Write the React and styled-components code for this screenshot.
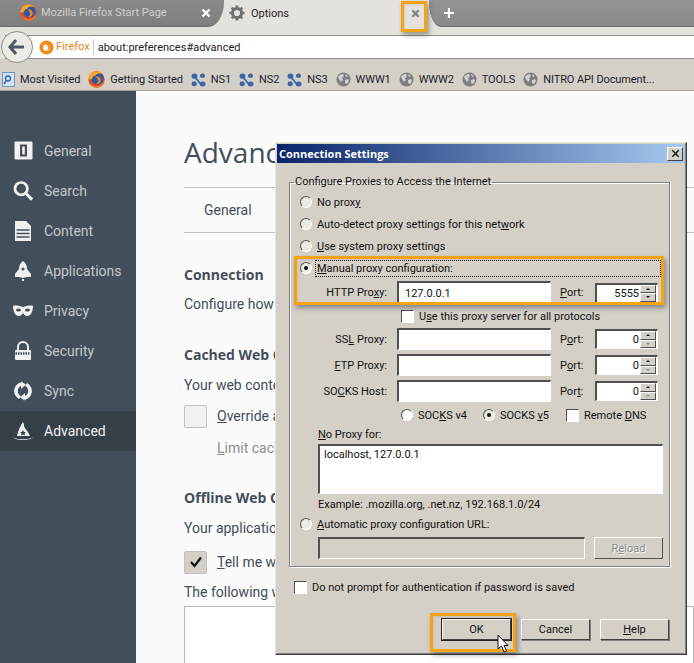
import React from "react";
import styled, { createGlobalStyle } from "styled-components";

const Global = createGlobalStyle`
  html, body { margin: 0; padding: 0; background: #fbfbfb; }
  * { box-sizing: border-box; }
`;
const UI = `Roboto, "Open Sans", sans-serif`;
const HEAD = `"Open Sans", "Noto Sans", sans-serif`;
const TAHOMA = `Roboto, "Noto Sans", sans-serif`;

const Page = styled.div`
  position: relative; width: 694px; height: 663px; overflow: hidden;
  display: flex; flex-direction: column; font-family: ${UI}; background: #fbfbfb;
`;
const TabStrip = styled.div`
  display: flex; height: 27px; background: #e4e2dc; flex: none; font-size: 11px; white-space: nowrap;
`;
const InactiveTab = styled.div`
  width: 224px; height: 27px; padding: 0 13px 1px 20px; display: flex; align-items: center; gap: 4px;
  background: linear-gradient(#8a8a8a, #7e7e7e); color: #cfcfcf;
  border-bottom: 1px solid #666c72; border-radius: 0 0 16px 0 / 0 0 26px 0;
`;
const TabClose = styled.span`
  margin-left: auto; display: flex;
`;
const ActiveTab = styled.div`
  width: 205px; height: 27px; padding: 0 9px 1px 5px; display: flex; align-items: center; gap: 6px; color: #222;
`;
const RestTabs = styled.div`
  flex: 1; height: 27px; padding-left: 14px; display: flex; align-items: center;
  background: linear-gradient(#939393, #8a8a8a);
  border-bottom: 1px solid #666c72; border-radius: 0 0 0 12px / 0 0 0 26px;
`;
const NavBar = styled.div`
  height: 32px; flex: none; background: #e4e2dc; display: flex; align-items: flex-end;
`;
const BackButton = styled.div`
  position: relative; z-index: 1; width: 32px; height: 32px; border-radius: 50%; flex: none;
  margin: 0 -28px 0 1px; transform: translateY(4px);
  background: #ecebe6; border: 1px solid #8b8b8b; display: flex; align-items: center; justify-content: center;
`;
const UrlBar = styled.div`
  flex: 1; height: 24px; background: #fff; border-top: 1px solid #8e8e8e; border-bottom: 1px solid #8e8e8e;
  padding-left: 34px; display: flex; align-items: center; font-size: 11px; color: #222;
`;
const Identity = styled.span`
  color: #e8852a; margin-left: 2px; padding-right: 3px; border-right: 1px solid #c9c9c9; margin-right: 4px; line-height: 16px;
`;
const Bookmarks = styled.div`
  height: 32px; flex: none; background: #d4d0c8; display: flex; align-items: center; gap: 8px; padding: 10px 0 0 2px;
  font-size: 11px; letter-spacing: -0.1px; color: #1c1c2c; border-bottom: 1px solid #a8a49c; white-space: nowrap;
`;
const Bookmark = styled.div`
  display: flex; align-items: center; gap: 5px;
`;
const Main = styled.div`
  flex: 1; display: flex; min-height: 0;
`;
const Sidebar = styled.nav`
  width: 136px; flex: none; background: #424f5a; padding-top: 40px;
`;
const NavItem = styled.div`
  height: 40px; display: flex; align-items: center; padding: 0 0 1px 13px; gap: 11px; font-size: 14px;
  color: ${p => (p.$active ? "#f1f1f1" : "#c4c8cc")};
  background: ${p => (p.$active ? "#343f48" : "transparent")};
`;
const IconBox = styled.span`
  width: 20px; height: 20px; display: flex; align-items: center; justify-content: center; flex: none;
`;
const Content = styled.main`
  flex: 1; padding: 40px 0 0 48px; color: #424e5a; font-size: 14px; white-space: nowrap; overflow: hidden; min-width: 0;
`;
const Title = styled.h1`
  font-family: ${HEAD}; font-size: 28px; font-weight: 400; margin: 0; height: 44px; line-height: 42px;
`;
const TabsRow = styled.div`
  margin-top: 12px; height: 46px; border-top: 1px solid #c1c1c1; border-bottom: 1px solid #c1c1c1;
  padding-left: 20px; display: flex; align-items: center;
`;
const SectionHead = styled.h2`
  font-family: ${HEAD}; font-size: 14px; font-weight: 700; margin: ${p => p.$top}px 0 0; height: 20px; line-height: 20px;
`;
const Para = styled.p`
  margin: ${p => p.$top}px 0 0; height: 20px; line-height: 20px;
`;
const CheckRow = styled.div`
  margin-top: ${p => p.$top}px; display: flex; align-items: center; gap: 10px; height: 22px;
`;
const PrefCheck = styled.span`
  width: 23px; height: 23px; border: 1px solid #c1c1c1; border-radius: 2px; flex: none;
  background: ${p => (p.$on ? "#d4d0c8" : "#f1f1f1")}; display: flex; align-items: center; justify-content: center;
`;
const Muted = styled.p`
  margin: ${p => p.$top}px 0 0 33px; height: 20px; line-height: 20px; color: #8b8f94;
`;
const ListBox = styled.div`
  margin-top: 4px; height: 70px; background: #fff; border: 1px solid #b8b8b8;
`;

const Dialog = styled.section`
  position: absolute; left: 275px; top: 142px; width: 412px; height: 513px;
  background: #d4d0c8; padding: 1px;
  border: 1px solid #e8e6e0; border-right-color: #404040; border-bottom-color: #404040;
  box-shadow: inset -1px -1px 0 #808080;
  font-family: ${TAHOMA}; font-size: 11px; color: #111;
`;
const TitleBar = styled.header`
  height: 19px; background: linear-gradient(90deg, #0a246a, #a6caf0); color: #fff; font-weight: 700;
  font-family: ${HEAD};
  display: flex; align-items: center; justify-content: space-between; padding: 0 2px 0 2px; font-size: 11px;
`;
const CloseBtn = styled.span`
  width: 16px; height: 14px; background: #d4d0c8; display: flex; align-items: center; justify-content: center;
  border: 1px solid #fff; border-right-color: #404040; border-bottom-color: #404040;
`;
const Group = styled.fieldset`
  margin: 12px 15px 0 12px; padding: 0; height: 392px; min-width: 0;
  border: 1px solid #808080; box-shadow: 1px 1px 0 #fff, inset 1px 1px 0 #fff;
`;
const Legend = styled.legend`
  margin-left: 4px; padding: 0 1px; height: 14px; line-height: 14px;
`;
const RadioRow = styled.div`
  height: 22px; display: flex; align-items: center; gap: 5px; padding-left: 10px;
  margin-top: ${p => p.$top || 0}px;
`;
const FocusLabel = styled.span`
  flex: none; width: 346px; height: 17px; line-height: 15px; border: 1px dotted #222; margin-left: -2px; padding-left: 1px;
`;
const Radio = styled.span`
  width: 12px; height: 12px; border-radius: 50%; flex: none; display: flex; align-items: center; justify-content: center;
  background: ${p => (p.$white ? "#fff" : "#ece9e3")};
  border: 1px solid #505050; border-right-color: #fff; border-bottom-color: #fff;
  &::after {
    content: ""; width: 4px; height: 4px; border-radius: 50%; background: ${p => (p.$on ? "#111" : "transparent")};
  }
`;
const ProxyGrid = styled.div`
  display: grid; grid-template-columns: 97px 164px 44px 63px; align-items: center;
  height: ${p => p.$h || 22}px; margin-top: ${p => p.$top || 0}px;
`;
const FieldLabel = styled.label`
  text-align: right; white-space: nowrap;
`;
const Field = styled.div`
  width: ${p => p.$w || 154}px; height: ${p => p.$h || 22}px; background: ${p => p.$bg || "#fff"};
  border: 2px solid #505050; border-right: 1px solid #fff; border-bottom: 1px solid #fff;
  padding-left: 6px; display: flex; align-items: center;
`;
const ProxyField = styled(Field)`
  margin-left: 10px;
`;
const PortLabel = styled.label`
  padding-left: 9px; white-space: nowrap;
`;
const Spinner = styled.div`
  width: 63px; height: 20px; background: #fff;
  border: 2px solid #505050; border-right: 1px solid #fff; border-bottom: 1px solid #fff;
  display: flex; align-items: center; justify-content: flex-end;
`;
const SpinValue = styled.span`
  padding-right: 1px;
`;
const SpinBtns = styled.span`
  width: 16px; height: 17px; display: flex; flex-direction: column; flex: none; margin-right: 1px;
`;
const SpinBtn = styled.span`
  flex: 1; background: #d4d0c8; border: 1px solid #fff; border-right-color: #505050; border-bottom-color: #505050;
  display: flex; align-items: center; justify-content: center;
  &::after {
    content: ""; border-left: 2px solid transparent; border-right: 2px solid transparent;
    ${p => (p.$down ? "border-top: 2px solid" : "border-bottom: 2px solid")} ${p => (p.$dim ? "#8a8a8a" : "#111")};
  }
`;
const CheckLine = styled.div`
  height: 22px; display: flex; align-items: center; gap: 5px;
  padding-left: ${p => p.$left || 0}px; margin-top: ${p => p.$top || 0}px;
`;
const ClassicCheck = styled.span`
  width: 13px; height: 13px; background: #fff; flex: none;
  border: 1px solid #505050; border-right-color: #fff; border-bottom-color: #fff;
`;
const SocksRow = styled.div`
  height: 22px; display: flex; align-items: center; padding-left: 111px; margin-top: 2px;
`;
const SocksItem = styled.span`
  display: flex; align-items: center; gap: 5px; width: ${p => p.$w}px; flex: none;
`;
const PlainLabel = styled.div`
  padding-left: 28px; height: ${p => p.$h}px; line-height: ${p => p.$h}px; margin-top: ${p => p.$top || 0}px;
`;
const TextArea = styled.div`
  margin: 2px 0 0 28px; width: 345px; height: 50px; background: #fff;
  border: 2px solid #505050; border-right: 1px solid #fff; border-bottom: 1px solid #fff;
  padding: 1px 4px; line-height: 16px;
`;
const UrlRow = styled.div`
  display: flex; gap: 9px; padding-left: 28px; margin-top: 2px;
`;
const Reload = styled.div`
  width: 69px; height: 22px; display: flex; align-items: center; justify-content: center; color: #8a8a8a;
  text-shadow: 1px 1px 0 #fff;
  border: 1px solid #fff; border-right-color: #505050; border-bottom-color: #505050;
`;
const Footer = styled.div`
  display: flex; gap: 10px; justify-content: flex-end; padding-right: 16px; margin-top: 21px;
`;
const DlgButton = styled.div`
  width: 69px; height: 21px; display: flex; align-items: center; justify-content: center;
  border: 1px solid #fff; border-right-color: #404040; border-bottom-color: #404040;
  box-shadow: ${p => (p.$def ? "0 0 0 1px #222" : "1px 1px 0 #808080")};
`;
const Highlight = styled.div`
  position: absolute; left: ${p => p.$x}px; top: ${p => p.$y}px; width: ${p => p.$w}px; height: ${p => p.$h}px;
  border: 3px solid #f6a313; box-shadow: 2px 3px 5px rgba(0,0,0,.35), inset 1px 1px 2px rgba(0,0,0,.08); pointer-events: none;
`;
const Cursor = styled.svg`
  position: absolute; left: 497px; top: 634px;
`;
const U = styled.span`
  text-decoration: underline; text-underline-offset: 1px;
`;

const FirefoxIcon = () => (
  <svg width="17" height="17" viewBox="0 0 16 16">
    <circle cx="8" cy="8" r="7.700" fill="#d8452a" />
    <circle cx="9" cy="7" r="5.600" fill="#2c5aa6" />
    <path d="M.6 8.500C.2 4 3.500.4 8 .3c2.300 0 4.500 1 5.800 2.800-1.200-.7-2.500-1-3.700-.8C8.300 2.600 7 3.600 6.500 4.800 5.500 4.500 4.800 5 4.600 5.600 4 7 3.500 7.500 2.800 7.700 2 8 1.200 7.900.6 8.500Z" fill="#f5a623" />
    <path d="M7 5c2.500-.5 4.800 1 5 3.400.1 2.300-2 4.300-4.600 3.900 1.700-.8 2.600-2.200 2-3.800C9 7 8.200 6.200 7 5Z" fill="#f08a24" />
    <path d="M1 8.800c.5 2.700 3 5 6.300 5.200 3.300.2 6.400-1.700 7.700-4.700.3 3.200-3 6.400-7 6.400-3.800 0-7-2.800-7-6.900Z" fill="#f0792a" />
  </svg>
);
const IdentityIcon = () => (
  <svg width="15" height="15" viewBox="0 0 16 16">
    <circle cx="8" cy="8" r="7.500" fill="#f28a1c" />
    <circle cx="8" cy="8" r="3.600" fill="#fff" />
    <path d="M6 3.500c2.500-1 5 .5 5.500 3 .4 2.500-1.500 5-4 5 2-1 2.800-2.800 2-4.500C8.800 5.500 7.500 4.500 6 3.500Z" fill="#f28a1c" />
  </svg>
);
const NitroIcon = () => (
  <svg width="15" height="14" viewBox="0 0 15 14" fill="#3d66a8">
    <ellipse cx="3.500" cy="3.200" rx="2.900" ry="2.600" />
    <ellipse cx="11.500" cy="2.800" rx="2.600" ry="2.200" />
    <ellipse cx="3.200" cy="10.800" rx="2.600" ry="2.500" />
    <ellipse cx="11.600" cy="11" rx="3" ry="2.500" />
    <path d="M5 4l5 6 -1.500 1L4 5.500Z" />
  </svg>
);
const GlobeIcon = () => (
  <svg width="15" height="15" viewBox="0 0 15 15">
    <circle cx="7.500" cy="7.500" r="7" fill="#7e7e7e" />
    <path d="M2 5c1-2 3-3 5-3l1 2-2 2 1 2-2 2-2-3ZM9 8l3-1 1 2-2 3-2-1ZM9 2l3 2-2 1Z" fill="#d2d2d2" />
  </svg>
);
const Cross = ({ c = "#fff", s = 10, w = 2.400 }) => (
  <svg width={s} height={s} viewBox="0 0 10 10"><path d="M1.500 1.500l7 7M8.500 1.500l-7 7" stroke={c} strokeWidth={w} /></svg>
);
const Gear = () => (
  <svg width="16" height="16" viewBox="0 0 16 16">
    <circle cx="8" cy="8" r="4.600" fill="none" stroke="#6f6f6f" strokeWidth="3" />
    <path d="M8 .5v3M8 12.500v3M.5 8h3M12.500 8h3M2.700 2.700l2.100 2.100M11.200 11.200l2.100 2.100M13.300 2.700l-2.100 2.100M4.800 11.200l-2.100 2.100" stroke="#6f6f6f" strokeWidth="2.600" />
  </svg>
);
const S = "#f0f0f0";
const sideIcons = {
  General: <svg width="19" height="19" viewBox="0 0 19 19"><rect x=".5" y=".5" width="18" height="18" rx="1" fill={S} /><rect x="6" y="3.500" width="7" height="12" fill="#424f5a" /><rect x="8.200" y="5.500" width="2.600" height="8" fill={S} /></svg>,
  Search: <svg width="21" height="21" viewBox="0 0 22 22"><circle cx="9" cy="9" r="6.800" fill="none" stroke={S} strokeWidth="3" /><path d="M14 14l7 7" stroke={S} strokeWidth="3.400" /></svg>,
  Content: <svg width="18" height="20" viewBox="0 0 18 20"><path d="M1 0h11l5 5v15H1Z" fill={S} /><path d="M2.500 9h13M2.500 12.500h13M2.500 16h13" stroke="#424f5a" strokeWidth="1.300" /></svg>,
  Applications: <svg width="18" height="20" viewBox="0 0 18 20"><path d="M9 0c3 2 4 5 4 8l4 5v3h-4l-4 1-4-1H1v-3l4-5c0-3 1-6 4-8Z" fill={S} /><circle cx="9" cy="8" r="1.600" fill="#424f5a" /><path d="M8 18h2v2H8Z" fill={S} /></svg>,
  Privacy: <svg width="20" height="12" viewBox="0 0 20 12"><path d="M0 1c3-1 7 0 10 1 3-1 7-2 10-1 0 5-2 10-6 10-2 0-3-2-4-3-1 1-2 3-4 3C2 11 0 6 0 1Z" fill={S} /><ellipse cx="5.500" cy="5" rx="2.500" ry="1.500" fill="#424f5a" /><ellipse cx="14.500" cy="5" rx="2.500" ry="1.500" fill="#424f5a" /></svg>,
  Security: <svg width="18" height="20" viewBox="0 0 18 20"><path d="M4 9V6a5 5 0 0110 0v3" fill="none" stroke={S} strokeWidth="2" /><rect x="1" y="9" width="16" height="10" rx="1" fill={S} /><path d="M1.500 12.500h15" stroke="#424f5a" strokeWidth="2.400" strokeDasharray="1.500 1" /></svg>,
  Sync: <svg width="20" height="20" viewBox="0 0 20 20"><path d="M10 1a9 9 0 00-4 17l2-3A5.500 5.500 0 018 5V8l5-4.500L8 .5Z" fill={S} /><path d="M10 19a9 9 0 004-17l-2 3a5.500 5.500 0 010 10v-3l-5 4.500 5 3Z" fill={S} /></svg>,
  Advanced: <svg width="20" height="20" viewBox="0 0 20 20"><path d="M10 1c-2 3-5 8-6 14h13C15 10 12 8 11 5c0-1 0-3-1-4Z" fill={S} /><path d="M0 16c3 3 17 3 20 0-2 4-18 4-20 0Z" fill={S} /><path d="M10 9l1 2 2 .2-1.500 1.400.5 2-2-1-2 1 .5-2L7 11.200 9 11Z" fill="#343f48" /></svg>,
};
const items = ["General", "Search", "Content", "Applications", "Privacy", "Security", "Sync", "Advanced"];

const ProxyRow = ({ label, value, port, h, top }) => (
  <ProxyGrid $h={h} $top={top}>
    <FieldLabel>{label}</FieldLabel>
    <ProxyField $h={h}>{value}</ProxyField>
    <PortLabel>{port.label}</PortLabel>
    <Spinner>
      <SpinValue>{port.value}</SpinValue>
      <SpinBtns><SpinBtn /><SpinBtn $down $dim={port.value === "0"} /></SpinBtns>
    </Spinner>
  </ProxyGrid>
);

export default function App() {
  return (
    <Page>
      <Global />
      <TabStrip>
        <InactiveTab>
          <FirefoxIcon />
          <span>Mozilla Firefox Start Page</span>
          <TabClose><Cross /></TabClose>
        </InactiveTab>
        <ActiveTab>
          <Gear /><span>Options</span>
          <TabClose><Cross c="#7d838a" s={9} /></TabClose>
        </ActiveTab>
        <RestTabs>
          <svg width="12" height="12" viewBox="0 0 12 12"><path d="M6 1v10M1 6h10" stroke="#fff" strokeWidth="2.200" /></svg>
        </RestTabs>
      </TabStrip>
      <NavBar>
        <BackButton>
          <svg width="18" height="16" viewBox="0 0 18 16"><path d="M8 1L2 8l6 7M2.500 8H16" fill="none" stroke="#4d5864" strokeWidth="3" /></svg>
        </BackButton>
        <UrlBar>
          <IdentityIcon />
          <Identity>Firefox</Identity>
          about:preferences#advanced
        </UrlBar>
      </NavBar>
      <Bookmarks>
        <Bookmark>
          <svg width="13" height="15" viewBox="0 0 13 15"><rect x=".5" y=".5" width="12" height="14" fill="#cfe3f5" stroke="#6f97c4" /><circle cx="6" cy="6.500" r="2.500" fill="none" stroke="#2f68a8" strokeWidth="1.300" /><path d="M4 9l-2 3" stroke="#2f68a8" strokeWidth="1.500" /></svg>
          <span>Most Visited</span>
        </Bookmark>
        <Bookmark><FirefoxIcon /><span>Getting Started</span></Bookmark>
        <Bookmark><NitroIcon /><span>NS1</span></Bookmark>
        <Bookmark><NitroIcon /><span>NS2</span></Bookmark>
        <Bookmark><NitroIcon /><span>NS3</span></Bookmark>
        <Bookmark><GlobeIcon /><span>WWW1</span></Bookmark>
        <Bookmark><GlobeIcon /><span>WWW2</span></Bookmark>
        <Bookmark><GlobeIcon /><span>TOOLS</span></Bookmark>
        <Bookmark><GlobeIcon /><span>NITRO API Document...</span></Bookmark>
      </Bookmarks>
      <Main>
        <Sidebar>
          {items.map(n => (
            <NavItem key={n} $active={n === "Advanced"}>
              <IconBox>{sideIcons[n]}</IconBox>
              <span>{n}</span>
            </NavItem>
          ))}
        </Sidebar>
        <Content>
          <Title>Advanced</Title>
          <TabsRow>General</TabsRow>
          <SectionHead $top={32}>Connection</SectionHead>
          <Para $top={9}>Configure how Firefox connects to the Internet</Para>
          <SectionHead $top={31}>Cached Web Content</SectionHead>
          <Para $top={10}>Your web content cache is currently using</Para>
          <CheckRow $top={10}><PrefCheck /><span><U>O</U>verride automatic cache management</span></CheckRow>
          <Muted $top={11}><U>L</U>imit cache to</Muted>
          <SectionHead $top={30}>Offline Web Content</SectionHead>
          <Para $top={10}>Your application cache is currently using</Para>
          <CheckRow $top={13}>
            <PrefCheck $on>
              <svg width="14" height="12" viewBox="0 0 14 12"><path d="M2 6l3.500 4L12 1.500" fill="none" stroke="#111" strokeWidth="2.200" /></svg>
            </PrefCheck>
            <span><U>T</U>ell me when a website asks to store data</span>
          </CheckRow>
          <Para $top={9}>The following websites are allowed to store data</Para>
          <ListBox />
        </Content>
      </Main>

      <Dialog>
        <TitleBar>
          <span>Connection Settings</span>
          <CloseBtn><Cross c="#111" s={9} w={1.600} /></CloseBtn>
        </TitleBar>
        <Group>
          <Legend>Configure Proxies to Access the Internet</Legend>
          <RadioRow $top={2}><Radio /><span>No prox<U>y</U></span></RadioRow>
          <RadioRow><Radio /><span>Auto-detect proxy settings for this net<U>w</U>ork</span></RadioRow>
          <RadioRow><Radio /><span><U>U</U>se system proxy settings</span></RadioRow>
          <RadioRow><Radio $on /><FocusLabel><U>M</U>anual proxy configuration:</FocusLabel></RadioRow>
          <ProxyRow label={<>HTTP Pro<U>x</U>y:</>} value="127.0.0.1" h={23} top={2} port={{ label: <><U>P</U>ort:</>, value: "5555" }} />
          <CheckLine $left={111} $top={1}><ClassicCheck /><span>U<U>s</U>e this proxy server for all protocols</span></CheckLine>
          <ProxyRow label={<>SS<U>L</U> Proxy:</>} top={1} port={{ label: <>P<U>o</U>rt:</>, value: "0" }} />
          <ProxyRow label={<><U>F</U>TP Proxy:</>} top={4} port={{ label: <>P<U>o</U>rt:</>, value: "0" }} />
          <ProxyRow label={<>SO<U>C</U>KS Host:</>} top={4} port={{ label: <>Por<U>t</U>:</>, value: "0" }} />
          <SocksRow>
            <SocksItem $w={82}><Radio $white /><span>SOC<U>K</U>S v4</span></SocksItem>
            <SocksItem $w={83}><Radio $on /><span>SOCKS <U>v</U>5</span></SocksItem>
            <SocksItem $w={110}><ClassicCheck /><span>Remote <U>D</U>NS</span></SocksItem>
          </SocksRow>
          <PlainLabel $h={15} $top={1}><U>N</U>o Proxy for:</PlainLabel>
          <TextArea>localhost, 127.0.0.1</TextArea>
          <PlainLabel $h={17} $top={2}>Example: .mozilla.org, .net.nz, 192.168.1.0/24</PlainLabel>
          <RadioRow><Radio /><span><U>A</U>utomatic proxy configuration URL:</span></RadioRow>
          <UrlRow>
            <Field $w={267} $bg="#d4d0c8" />
            <Reload>R<U>e</U>load</Reload>
          </UrlRow>
        </Group>
        <CheckLine $left={17} $top={9}><ClassicCheck /><span>Do not prompt for authentication if password is saved</span></CheckLine>
        <Footer>
          <DlgButton $def>OK</DlgButton>
          <DlgButton>Cancel</DlgButton>
          <DlgButton><span><U>H</U>elp</span></DlgButton>
        </Footer>
      </Dialog>

      <Highlight $x={401} $y={1} $w={26} $h={31} />
      <Highlight $x={294} $y={256} $w={370} $h={49} />
      <Highlight $x={430} $y={613} $w={86} $h={39} />
      <Cursor width="13" height="19" viewBox="0 0 13 19">
        <path d="M1 1v14l3.500-3 2.500 6 2.500-1-2.500-5.500H11Z" fill="#fff" stroke="#111" />
      </Cursor>
    </Page>
  );
}
